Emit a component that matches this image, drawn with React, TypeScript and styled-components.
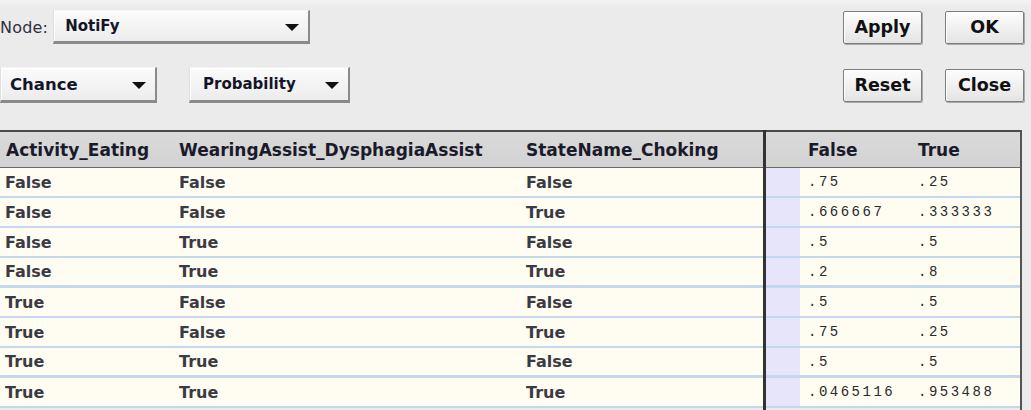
import React from "react";
import styled, { createGlobalStyle } from "styled-components";

const Global = createGlobalStyle`
  html, body { margin: 0; padding: 0; }
  body {
    background: #ebebeb;
    font-family: "DejaVu Sans", "Liberation Sans", sans-serif;
    color: #1a1a1a;
    width: 1031px;
    height: 410px;
    overflow: hidden;
  }
`;

const Page = styled.div`
  display: flex;
  flex-direction: column;
  width: 1031px;
  height: 410px;
  background: linear-gradient(#f3f3f3 0px, #ebebeb 8px);
`;

const Controls = styled.div`
  display: flex;
  flex-direction: column;
  gap: 23px;
  padding: 10px 7px 0 0;
`;

const ControlRow = styled.div<{ $h: number }>`
  display: flex;
  align-items: center;
  justify-content: space-between;
  height: ${(p) => p.$h}px;
`;

const Group = styled.div<{ $gap: number }>`
  display: flex;
  align-items: center;
  gap: ${(p) => p.$gap}px;
  height: 100%;
`;

const Label = styled.span`
  font-size: 16px;
  color: #30303e;
  letter-spacing: 0.2px;
`;

const Combo = styled.div<{ $w: number; $pl: number; $fs: number }>`
  box-sizing: border-box;
  width: ${(p) => p.$w}px;
  height: 100%;
  display: flex;
  align-items: center;
  justify-content: space-between;
  padding: 0 9px 0 ${(p) => p.$pl}px;
  background: linear-gradient(#fbfbfb, #ececec);
  border-top: 1px solid #f4f4f4;
  border-left: 1px solid #e0e0e0;
  border-right: 2px solid #8a8a8a;
  border-bottom: 3px solid #8a8a8a;
  box-shadow: inset 1px 1px 0 #ffffff;
  font-weight: bold;
  font-size: ${(p) => p.$fs}px;
  color: #15152a;
`;

const Arrow = styled.span`
  width: 0;
  height: 0;
  border-left: 7px solid transparent;
  border-right: 7px solid transparent;
  border-top: 7px solid #111;
  margin-top: 2px;
`;

const Button = styled.div`
  box-sizing: border-box;
  width: 79px;
  height: 33px;
  display: flex;
  align-items: center;
  justify-content: center;
  background: linear-gradient(#fdfdfd, #e4e4e4);
  border: 1px solid #7d7d7d;
  border-radius: 2px;
  box-shadow: inset 1px 1px 0 #ffffff, 1px 1px 0 #a9a9a9;
  font-weight: bold;
  font-size: 17.5px;
  color: #111;
`;

const Table = styled.div`
  display: flex;
  margin-top: 27px;
  width: 1022px;
  flex: 1;
  min-height: 0;
`;

const Pane = styled.div<{ $w: number; $divider?: boolean }>`
  display: flex;
  flex-direction: column;
  width: ${(p) => p.$w}px;
  box-sizing: border-box;
  border-left: ${(p) => (p.$divider ? "3px solid #333" : "none")};
  border-right: ${(p) => (p.$divider ? "2px solid #555" : "none")};
`;

const Header = styled.div<{ $cols: string }>`
  display: grid;
  grid-template-columns: ${(p) => p.$cols};
  height: 38px;
  box-sizing: border-box;
  border-top: 2px solid #4a4a4a;
  border-bottom: 1px solid #6a6a6a;
  background: linear-gradient(#dadada, #d2d2d2);
  align-items: center;
`;

const HeadCell = styled.div<{ $pl: number }>`
  padding-left: ${(p) => p.$pl}px;
  font-weight: bold;
  font-size: 17px;
  color: #1a1a2a;
  white-space: nowrap;
`;

const Row = styled.div<{ $cols: string; $thick?: boolean }>`
  display: grid;
  grid-template-columns: ${(p) => p.$cols};
  height: 30px;
  box-sizing: border-box;
  border-bottom: ${(p) => (p.$thick ? "3px" : "2px")} solid #c3d7ee;
  background: #fffcf1;
  align-items: center;
`;

const Cell = styled.div<{ $pl: number }>`
  padding-left: ${(p) => p.$pl}px;
  font-weight: bold;
  font-size: 16px;
  color: #3a3a44;
  white-space: nowrap;
`;

const Stripe = styled.div`
  align-self: stretch;
  background: #e7e5fa;
`;

const Num = styled.div`
  padding-left: 8px;
  font-family: "Liberation Mono", "DejaVu Sans Mono", monospace;
  font-size: 14px;
  letter-spacing: 2.5px;
  color: #2a2a2a;
  white-space: nowrap;
`;

const leftCols = "173px 347px 1fr";
const rightCols = "34px 110px 1fr";

const rows: [string, string, string, string, string][] = [
  ["False", "False", "False", ".75", ".25"],
  ["False", "False", "True", ".666667", ".333333"],
  ["False", "True", "False", ".5", ".5"],
  ["False", "True", "True", ".2", ".8"],
  ["True", "False", "False", ".5", ".5"],
  ["True", "False", "True", ".75", ".25"],
  ["True", "True", "False", ".5", ".5"],
  ["True", "True", "True", ".0465116", ".953488"],
];

const thick = [3, 6];

export default function App() {
  return (
    <>
      <Global />
      <Page>
        <Controls>
          <ControlRow $h={34}>
            <Group $gap={5}>
              <Label>Node:</Label>
              <Combo $w={257} $pl={11} $fs={15}>
                <span>NotiFy</span>
                <Arrow />
              </Combo>
            </Group>
            <Group $gap={23}>
              <Button>Apply</Button>
              <Button>OK</Button>
            </Group>
          </ControlRow>
          <ControlRow $h={36}>
            <Group $gap={32}>
              <Combo $w={157} $pl={9} $fs={16.5}>
                <span>Chance</span>
                <Arrow />
              </Combo>
              <Combo $w={161} $pl={13} $fs={15}>
                <span>Probability</span>
                <Arrow />
              </Combo>
            </Group>
            <Group $gap={23}>
              <Button>Reset</Button>
              <Button>Close</Button>
            </Group>
          </ControlRow>
        </Controls>
        <Table>
          <Pane $w={763}>
            <Header $cols={leftCols}>
              <HeadCell $pl={6}>Activity_Eating</HeadCell>
              <HeadCell $pl={6}>WearingAssist_DysphagiaAssist</HeadCell>
              <HeadCell $pl={6}>StateName_Choking</HeadCell>
            </Header>
            {rows.map((r, i) => (
              <Row key={i} $cols={leftCols} $thick={thick.includes(i)}>
                <Cell $pl={5}>{r[0]}</Cell>
                <Cell $pl={6}>{r[1]}</Cell>
                <Cell $pl={6}>{r[2]}</Cell>
              </Row>
            ))}
          </Pane>
          <Pane $w={259} $divider>
            <Header $cols={rightCols}>
              <span />
              <HeadCell $pl={8}>False</HeadCell>
              <HeadCell $pl={8}>True</HeadCell>
            </Header>
            {rows.map((r, i) => (
              <Row key={i} $cols={rightCols} $thick={thick.includes(i)}>
                <Stripe />
                <Num>{r[3]}</Num>
                <Num>{r[4]}</Num>
              </Row>
            ))}
          </Pane>
        </Table>
      </Page>
    </>
  );
}
